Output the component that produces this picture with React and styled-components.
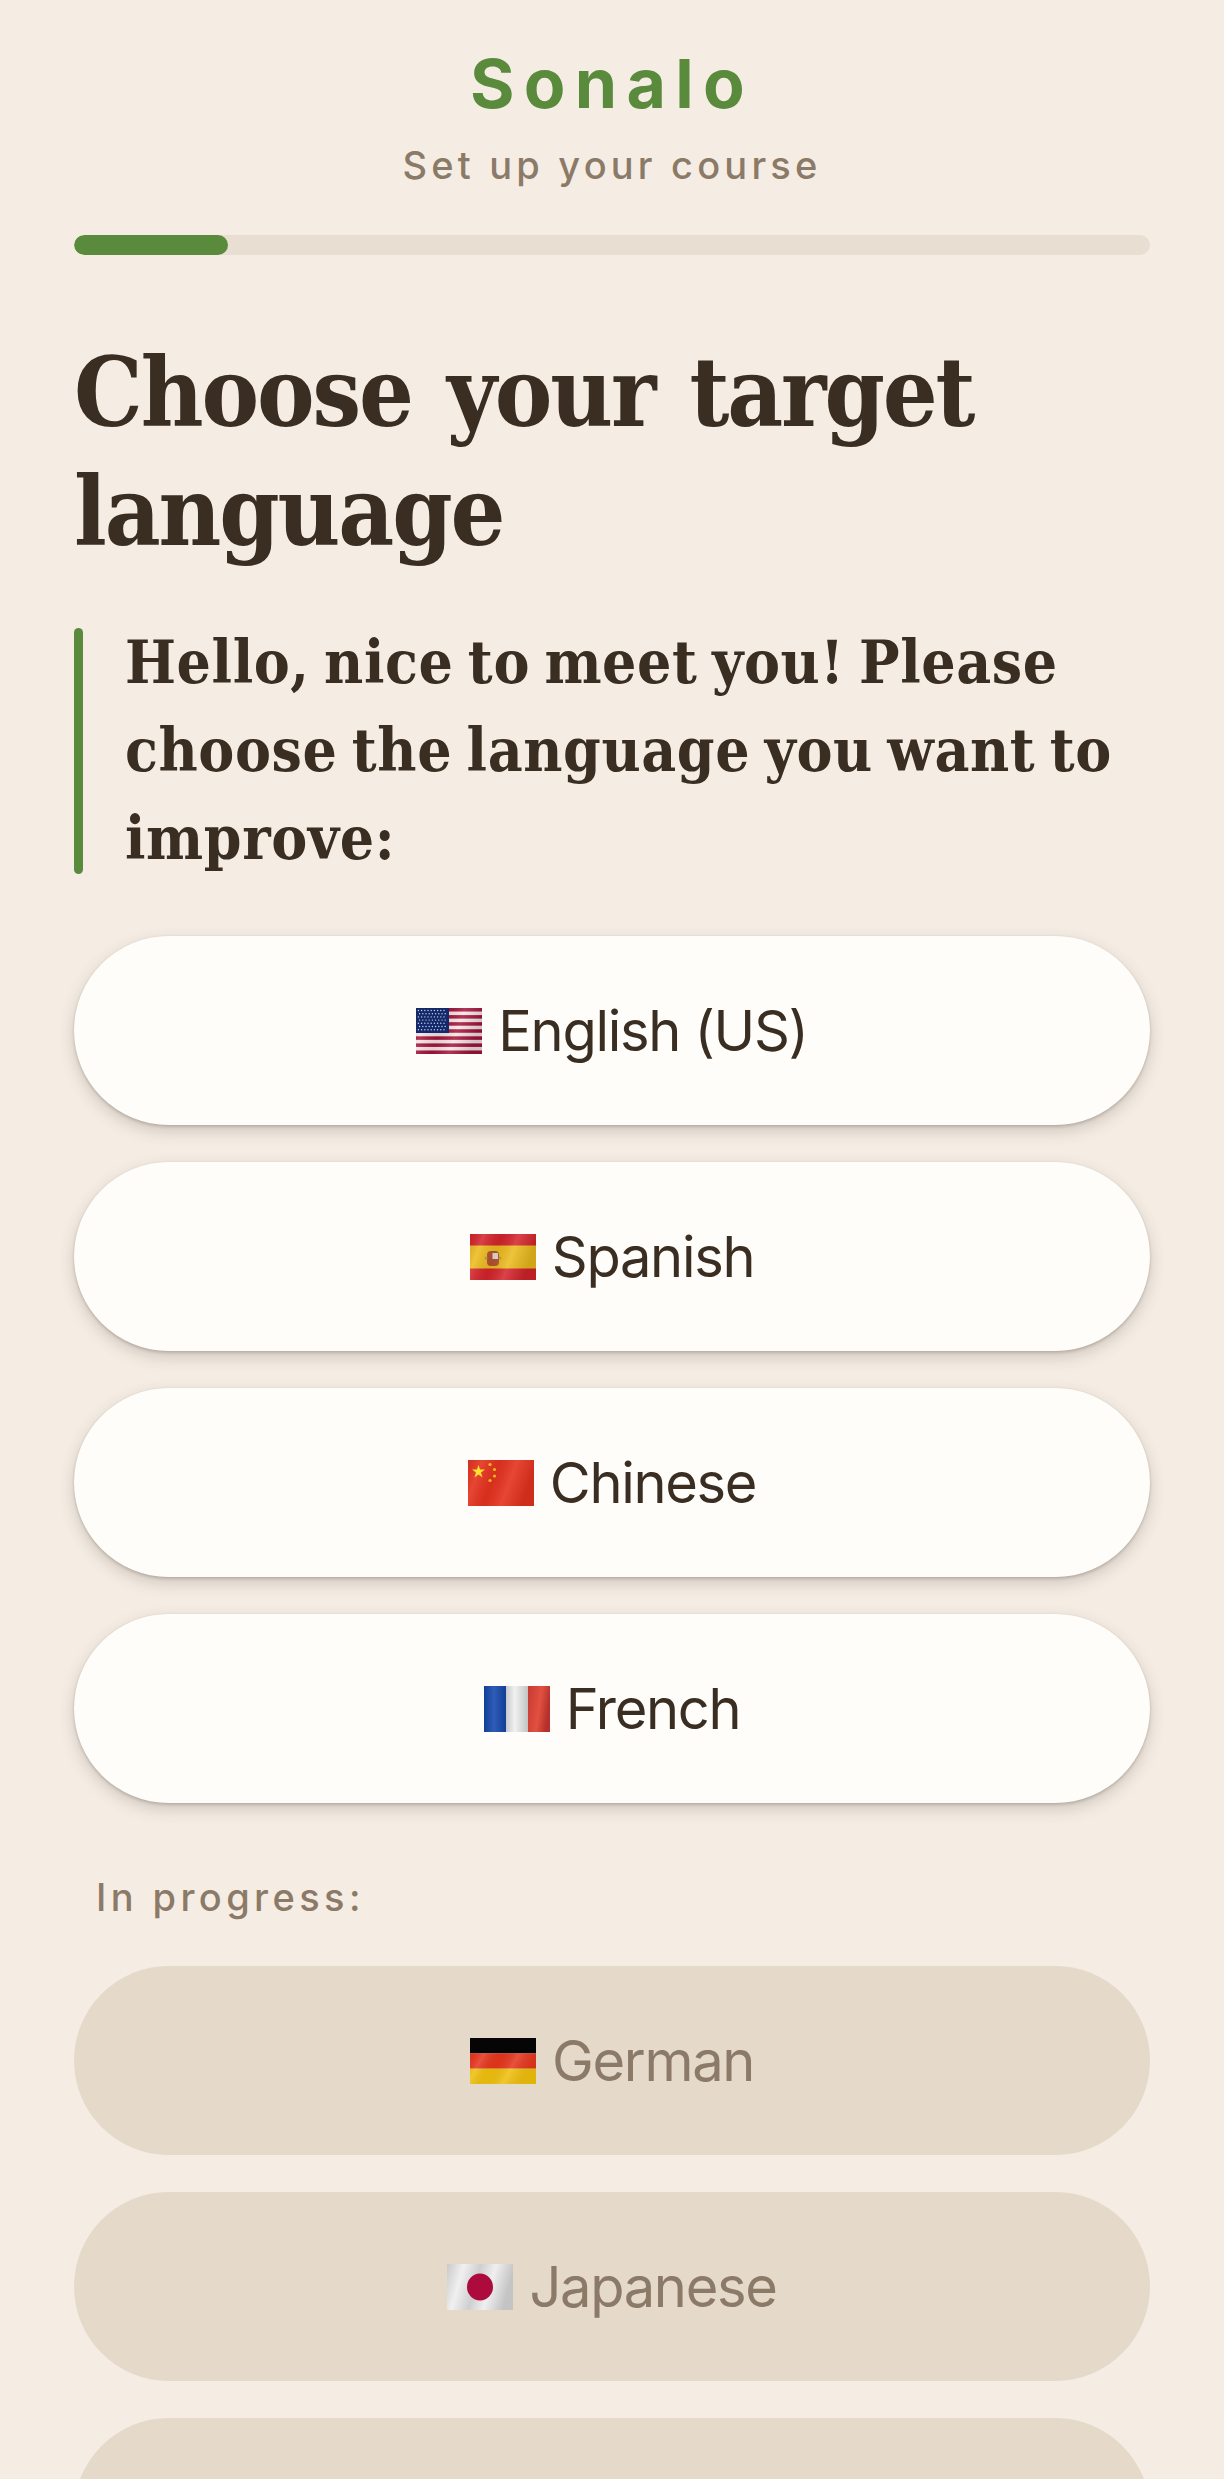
import React from "react";
import styled, { createGlobalStyle } from "styled-components";

const GlobalStyle = createGlobalStyle`
  html, body {
    margin: 0;
    padding: 0;
    background: #f5ede4;
  }
  * {
    box-sizing: border-box;
  }
`;

const Shade = ({ id, light = 0.25, dark = 0.2 }) => (
  <defs>
    <linearGradient id={id} x1="0" y1="0" x2="1" y2="0.25">
      <stop offset="0" stopColor="#000" stopOpacity={dark * 0.6} />
      <stop offset="0.2" stopColor="#fff" stopOpacity={light} />
      <stop offset="0.45" stopColor="#000" stopOpacity={dark * 0.6} />
      <stop offset="0.7" stopColor="#fff" stopOpacity={light} />
      <stop offset="1" stopColor="#000" stopOpacity={dark} />
    </linearGradient>
  </defs>
);

const UsFlag = () => {
  const stars = [];
  for (let r = 0; r < 7; r++) {
    for (let c = 0; c < 9; c++) {
      stars.push(<circle key={`${r}-${c}`} cx={2.4 + c * 3.2 + (r % 2) * 1.2} cy={2.5 + r * 3.2} r="0.7" fill="#c9d4ea" />);
    }
  }
  return (
    <FlagSvg viewBox="0 0 66 46">
      <Shade id="usShade" light={0.14} dark={0.14} />
      <rect width="66" height="46" fill="#f4e4e6" />
      {[0, 2, 4, 6, 8, 10, 12].map((i) => (
        <rect key={i} y={(i * 46) / 13} width="66" height={46 / 13} fill="#a5143a" />
      ))}
      <rect width="66" height="46" fill="url(#usShade)" />
      <rect width="33" height="25" fill="#14296a" />
      {stars}
    </FlagSvg>
  );
};

const EsFlag = () => (
  <FlagSvg viewBox="0 0 66 46">
    <Shade id="esShade" light={0.14} dark={0.12} />
    <rect width="66" height="46" fill="#d5232b" />
    <rect y="11.5" width="66" height="23" fill="#ecbb1c" />
    <rect x="17" y="17" width="12" height="15" rx="4" fill="#b3532f" />
    <rect x="22.5" y="19" width="5.5" height="6" fill="#e8d9d0" />
    <circle cx="16" cy="24" r="1.5" fill="#c79a3d" />
    <circle cx="30" cy="24" r="1.5" fill="#c79a3d" />
    <rect width="66" height="46" fill="url(#esShade)" />
  </FlagSvg>
);

const CnFlag = () => (
  <FlagSvg viewBox="0 0 66 46">
    <Shade id="cnShade" light={0.1} dark={0.1} />
    <rect width="66" height="46" fill="#e5321f" />
    <polygon points="10.5,5 12,9.5 17,9.5 13,12.5 14.5,17.5 10.5,14.5 6.5,17.5 8,12.5 4,9.5 9,9.5" fill="#fbe21d" />
    <circle cx="22" cy="4.5" r="1.6" fill="#f6c51d" />
    <circle cx="26.5" cy="9.5" r="1.6" fill="#f6c51d" />
    <circle cx="26.5" cy="16" r="1.6" fill="#f6c51d" />
    <circle cx="22" cy="20.5" r="1.6" fill="#f6c51d" />
    <rect width="66" height="46" fill="url(#cnShade)" />
  </FlagSvg>
);

const FrFlag = () => (
  <FlagSvg viewBox="0 0 66 46">
    <defs>
      <linearGradient id="frBlue" x1="0" y1="0" x2="1" y2="0">
        <stop offset="0" stopColor="#123f96" />
        <stop offset="0.45" stopColor="#2e5cb6" />
        <stop offset="1" stopColor="#123f96" />
      </linearGradient>
      <linearGradient id="frWhite" x1="0" y1="0" x2="1" y2="0">
        <stop offset="0" stopColor="#c9cacc" />
        <stop offset="0.4" stopColor="#f1f1f1" />
        <stop offset="1" stopColor="#c2c3c4" />
      </linearGradient>
      <linearGradient id="frRed" x1="0" y1="0" x2="1" y2="0.3">
        <stop offset="0" stopColor="#c63a33" />
        <stop offset="0.6" stopColor="#e2503f" />
        <stop offset="1" stopColor="#b5302c" />
      </linearGradient>
    </defs>
    <rect width="22" height="46" fill="url(#frBlue)" />
    <rect x="22" width="22" height="46" fill="url(#frWhite)" />
    <rect x="44" width="22" height="46" fill="url(#frRed)" />
  </FlagSvg>
);

const DeFlag = () => (
  <FlagSvg viewBox="0 0 66 46">
    <Shade id="deShade" light={0.14} dark={0.06} />
    <rect width="66" height="15.4" fill="#050505" />
    <rect y="15.4" width="66" height="15.3" fill="#e5351c" />
    <rect y="30.7" width="66" height="15.3" fill="#efbf0d" />
    <rect y="15.4" width="66" height="30.6" fill="url(#deShade)" />
  </FlagSvg>
);

const JpFlag = () => (
  <FlagSvg viewBox="0 0 66 46">
    <defs>
      <linearGradient id="jpWhite" x1="0" y1="0" x2="1" y2="0.2">
        <stop offset="0" stopColor="#c9c9c9" />
        <stop offset="0.25" stopColor="#f0f0f0" />
        <stop offset="0.5" stopColor="#cfcfcf" />
        <stop offset="0.72" stopColor="#efefef" />
        <stop offset="1" stopColor="#c4c4c4" />
      </linearGradient>
    </defs>
    <rect width="66" height="46" fill="url(#jpWhite)" />
    <ellipse cx="33" cy="23" rx="13" ry="13.5" fill="#ad0a3e" />
  </FlagSvg>
);

const available = [
  { name: "English (US)", Flag: UsFlag },
  { name: "Spanish", Flag: EsFlag },
  { name: "Chinese", Flag: CnFlag },
  { name: "French", Flag: FrFlag },
];

const inProgress = [
  { name: "German", Flag: DeFlag },
  { name: "Japanese", Flag: JpFlag },
];

const App = () => {
  return (
    <Screen>
      <GlobalStyle />
      <Header>
        <Logo>Sonalo</Logo>
        <Subtitle>Set up your course</Subtitle>
      </Header>
      <Track>
        <Fill style={{ width: `${(154 / 1076) * 100}%` }} />
      </Track>
      <Title>Choose your target language</Title>
      <Quote>Hello, nice to meet you! Please choose the language you want to improve:</Quote>
      <Options $top={54}>
        {available.map(({ name, Flag }) => (
          <Option key={name}>
            <Flag />
            {name}
          </Option>
        ))}
      </Options>
      <SectionLabel>In progress:</SectionLabel>
      <Options $top={45}>
        {inProgress.map(({ name, Flag }) => (
          <Option key={name} disabled>
            <Flag />
            {name}
          </Option>
        ))}
        {/* next row is cut off by the bottom of the screen before its label starts */}
        <Option disabled />
      </Options>
    </Screen>
  );
};

export default App;

const sansStack = `"Inter", "Noto Sans", sans-serif`;
const serifStack = `"DejaVu Serif Condensed", "DejaVu Serif", serif`;

const Screen = styled.div`
  height: 100vh;
  overflow: hidden;
  padding: 0 74px;
  background: #f5ede4;
  font-family: ${sansStack};
`;

const Header = styled.header`
  padding-top: 40px;
  text-align: center;
`;

const Logo = styled.div`
  font-size: 68px;
  line-height: 86px;
  font-weight: 700;
  letter-spacing: 9.3px;
  color: #5a8a3c;
`;

const Subtitle = styled.div`
  margin-top: 15px;
  font-size: 38px;
  line-height: 48px;
  font-weight: 500;
  letter-spacing: 4.2px;
  color: #8c7a68;
`;

const Track = styled.div`
  margin-top: 46px;
  height: 20px;
  border-radius: 10px;
  background: #e8dfd2;
  overflow: hidden;
`;

const Fill = styled.div`
  height: 100%;
  border-radius: 10px;
  background: #5a8a3c;
`;

const Title = styled.h1`
  margin: 78px 0 0;
  font-family: ${serifStack};
  font-size: 96px;
  line-height: 119px;
  font-weight: 700;
  letter-spacing: -2.1px;
  word-spacing: 7px;
  color: #3a2e22;
`;

const Quote = styled.p`
  position: relative;
  margin: 47px 0 0;
  padding: 0 0 0 51px;
  font-family: ${serifStack};
  font-size: 60px;
  line-height: 88px;
  font-weight: 700;
  letter-spacing: 0.6px;
  word-spacing: -5px;
  color: #3a2e22;

  &::before {
    content: "";
    position: absolute;
    left: 0;
    top: 10px;
    bottom: 8px;
    width: 9px;
    border-radius: 5px;
    background: #5a8a3c;
  }
`;

const Options = styled.div`
  display: flex;
  flex-direction: column;
  flex-shrink: 0;
  gap: 37px;
  margin-top: ${({ $top }) => $top}px;
`;

const Option = styled.button`
  display: flex;
  align-items: center;
  justify-content: center;
  gap: 16px;
  width: 100%;
  height: 189px;
  padding: 0;
  border: 0;
  border-radius: 95px;
  font-family: ${sansStack};
  font-size: 56px;
  letter-spacing: -1.3px;
  background: ${({ disabled }) => (disabled ? "#e5d9ca" : "#fffdf9")};
  color: ${({ disabled }) => (disabled ? "#8c7a68" : "#3a2e22")};
  box-shadow: ${({ disabled }) =>
    disabled
      ? "none"
      : "0 2px 3px rgba(58, 46, 34, 0.18), 0 6px 16px rgba(58, 46, 34, 0.2), 0 0 2px rgba(58, 46, 34, 0.08)"};
`;

const FlagSvg = styled.svg`
  width: 66px;
  height: 46px;
  flex-shrink: 0;
`;

const SectionLabel = styled.div`
  margin-top: 70px;
  padding-left: 22px;
  font-size: 38px;
  line-height: 48px;
  font-weight: 500;
  letter-spacing: 4.4px;
  color: #8c7a68;
`;
